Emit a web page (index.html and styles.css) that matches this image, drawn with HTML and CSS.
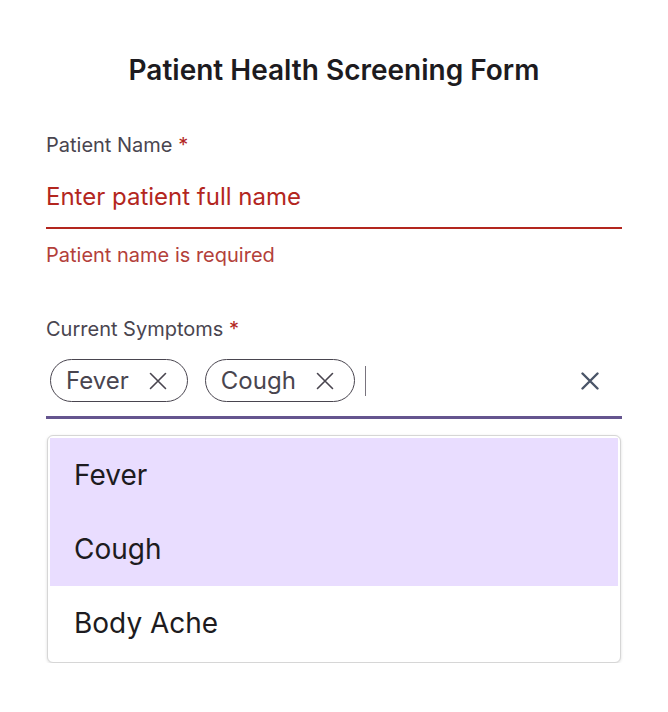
FILE: index.html
```html
<!DOCTYPE html>
<html lang="en">
<head>
<meta charset="utf-8">
<title>Patient Health Screening Form</title>
<link rel="stylesheet" href="styles.css">
</head>
<body>
<main class="page">
  <h1 class="title">Patient Health Screening Form</h1>

  <section class="field">
    <div class="label">Patient Name <span class="req">*</span></div>
    <div class="text-input error-input">Enter patient full name</div>
    <div class="error-msg">Patient name is required</div>
  </section>

  <section class="field field-symptoms">
    <div class="label">Current Symptoms <span class="req">*</span></div>
    <div class="chip-input">
      <div class="chips">
        <span class="chip">Fever
          <svg class="chip-x" viewBox="0 0 18 18" width="18" height="18"><path d="M1.5 1.5L16.5 16.5M16.5 1.5L1.5 16.5" fill="none" stroke="currentColor" stroke-width="1.6" stroke-linecap="round"/></svg>
        </span>
        <span class="chip">Cough
          <svg class="chip-x" viewBox="0 0 18 18" width="18" height="18"><path d="M1.5 1.5L16.5 16.5M16.5 1.5L1.5 16.5" fill="none" stroke="currentColor" stroke-width="1.6" stroke-linecap="round"/></svg>
        </span>
        <span class="caret"></span>
      </div>
      <svg class="clear-x" viewBox="0 0 18 18" width="18" height="18"><path d="M1.5 1.5L16.5 16.5M16.5 1.5L1.5 16.5" fill="none" stroke="currentColor" stroke-width="2.4" stroke-linecap="round"/></svg>
    </div>
    <ul class="menu">
      <li class="option selected">Fever</li>
      <li class="option selected">Cough</li>
      <li class="option">Body Ache</li>
    </ul>
  </section>
</main>
</body>
</html>
```

FILE: styles.css
```css
* { box-sizing: border-box; }
html, body {
  margin: 0;
  padding: 0;
  background: #ffffff;
}
body {
  font-family: Inter, "Noto Sans", "Liberation Sans", sans-serif;
  color: #1d1b20;
}
.page {
  width: 576px;
  margin-left: 46px;
}
.title {
  margin: 0;
  padding-top: 52px;
  font-size: 28px;
  line-height: 36px;
  font-weight: 600;
  text-align: center;
  color: #1d1b20;
}
.field {
  margin-top: 45px;
}
.label {
  font-size: 20px;
  line-height: 24px;
  color: #49454f;
}
.req {
  color: #b3261e;
}
.text-input {
  margin-top: 25px;
  font-size: 24px;
  line-height: 30px;
  padding-bottom: 15px;
  border-bottom: 2px solid #b3261e;
}
.error-input {
  color: #b3261e;
}
.error-msg {
  margin-top: 14px;
  font-size: 20px;
  line-height: 24px;
  color: #b3403a;
}
.field-symptoms {
  margin-top: 50px;
}
.chip-input {
  display: flex;
  align-items: center;
  justify-content: space-between;
  padding: 18px 23px 14px 4px;
  border-bottom: 3px solid #65558f;
}
.chips {
  display: flex;
  align-items: center;
  gap: 17px;
}
.chip {
  display: inline-flex;
  align-items: center;
  gap: 20px;
  height: 43px;
  padding: 0 20px 0 15px;
  border: 1.5px solid #49454f;
  border-radius: 22px;
  font-size: 24px;
  color: #49454f;
}
.chip-x {
  display: block;
  color: #49454f;
}
.caret {
  display: block;
  width: 1.5px;
  height: 30px;
  margin-left: -7px;
  background: #79747e;
}
.clear-x {
  display: block;
  color: #4a5568;
}
.menu {
  list-style: none;
  margin: 16px 1px 0;
  padding: 2px;
  border: 1px solid #d6d6d6;
  border-radius: 6px;
  box-shadow: 0 1px 3px rgba(0, 0, 0, 0.14);
  background: #ffffff;
}
.option {
  height: 74px;
  display: flex;
  align-items: center;
  padding-left: 24px;
  font-size: 28px;
  color: #1d1b20;
}
.option.selected {
  background: #e9ddff;
}
```
